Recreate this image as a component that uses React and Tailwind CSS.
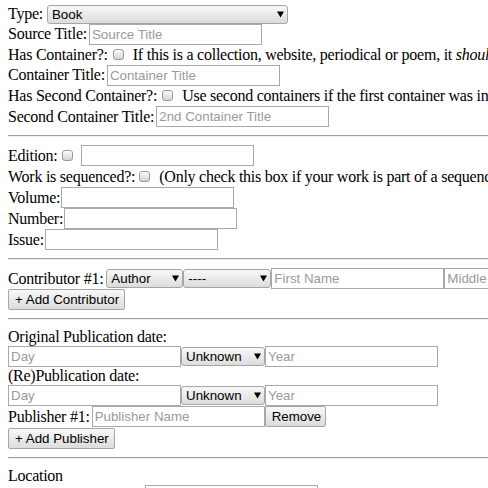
import React from 'react';

const sans = "font-['Liberation_Sans',Arial,sans-serif] text-[13.33px] tracking-normal";

function Field({ placeholder = '', w = 'w-[173px]' }) {
  return (
    <input
      type="text"
      placeholder={placeholder}
      className={`${w} h-[21px] shrink-0 border border-[#a9a9a9] bg-white px-[2px] text-black ${sans} placeholder:text-[#9a9a9a] outline-none`}
    />
  );
}

function Sel({ value, w }) {
  return (
    <span className={`relative inline-flex shrink-0 ${w} h-[19px]`}>
      <select
        defaultValue={value}
        className={`appearance-none w-full h-full rounded-[3px] border border-[#a6a6a6] bg-gradient-to-b from-[#f8f8f8] to-[#dcdcdc] pl-[4px] pr-[14px] text-black ${sans} leading-[17px] outline-none`}
      >
        <option>{value}</option>
      </select>
      <svg className="pointer-events-none absolute right-[4px] top-[6px]" width="7" height="7" viewBox="0 0 7 7">
        <path d="M0 0.5h7L3.5 6.5z" fill="#000" />
      </svg>
    </span>
  );
}

function Check({ ml = 'ml-[5px]', mr = 'mr-[9px]' }) {
  return (
    <input
      type="checkbox"
      className={`appearance-none w-[11px] h-[11px] shrink-0 rounded-[3px] border border-[#9a9a9a] bg-gradient-to-b from-[#fcfcfc] to-[#d4d4d4] ${ml} ${mr}`}
    />
  );
}

function Btn({ children, w }) {
  return (
    <button
      type="button"
      className={`${w} h-[21px] shrink-0 rounded-[2px] border border-[#a6a6a6] bg-gradient-to-b from-[#f8f8f8] to-[#dcdcdc] px-[6px] text-black ${sans} leading-[19px]`}
    >
      {children}
    </button>
  );
}

function Row({ h = 'h-[21px]', children }) {
  return <div className={`flex items-center ${h} whitespace-nowrap`}>{children}</div>;
}

function Rule() {
  return <div className="my-[8px] h-[2px] border-t border-[#9e9e9e] border-b border-b-[#eeeeee]" />;
}

export default function App() {
  return (
    <div className="w-[488px] h-[488px] overflow-hidden bg-white pl-[8px] pt-[4px] text-[16px] tracking-[-0.25px] text-black font-['Liberation_Serif','Times_New_Roman',serif]">
      <Row h="h-[20px]">
        <span className="mr-[4px]">Type:</span>
        <Sel value="Book" w="w-[241px]" />
      </Row>
      <Row h="h-[20px]">
        <span className="mr-[2px]">Source Title:</span>
        <Field placeholder="Source Title" />
      </Row>
      <Row>
        <span>Has Container?:</span>
        <Check />
        <span>
          If this is a collection, website, periodical or poem, it <i>should</i> be placed inside a container.
        </span>
      </Row>
      <Row h="h-[20px]">
        <span className="mr-[2px]">Container Title:</span>
        <Field placeholder="Container Title" />
      </Row>
      <Row>
        <span>Has Second Container?:</span>
        <Check />
        <span>Use second containers if the first container was inside another container.</span>
      </Row>
      <Row>
        <span className="mr-[2px]">Second Container Title:</span>
        <Field placeholder="2nd Container Title" />
      </Row>

      <Rule />

      <Row>
        <span>Edition:</span>
        <Check ml="ml-[4px]" mr="mr-[8px]" />
        <Field />
      </Row>
      <Row>
        <span>Work is sequenced?:</span>
        <Check ml="ml-[4px]" />
        <span>(Only check this box if your work is part of a sequence of volumes or issues)</span>
      </Row>
      <Row>
        <span className="mr-[1px]">Volume:</span>
        <Field />
      </Row>
      <Row>
        <span className="mr-[1px]">Number:</span>
        <Field />
      </Row>
      <Row>
        <span className="mr-[1px]">Issue:</span>
        <Field />
      </Row>

      <Rule />

      <Row>
        <span className="mr-[3px]">Contributor #1:</span>
        <Sel value="Author" w="w-[77px]" />
        <span className="w-[2px]" />
        <Sel value="----" w="w-[88px]" />
        <Field placeholder="First Name" />
        <Field placeholder="Middle Name" />
        <Field placeholder="Last Name" />
      </Row>
      <Row h="h-[21px]">
        <Btn w="w-[117px]">+ Add Contributor</Btn>
      </Row>

      <Rule />

      <Row h="h-[18px]">
        <span>Original Publication date:</span>
      </Row>
      <Row>
        <Field placeholder="Day" />
        <Sel value="Unknown" w="w-[84px]" />
        <Field placeholder="Year" />
      </Row>
      <Row h="h-[18px]">
        <span>(Re)Publication date:</span>
      </Row>
      <Row>
        <Field placeholder="Day" />
        <Sel value="Unknown" w="w-[84px]" />
        <Field placeholder="Year" />
      </Row>
      <Row>
        <span className="mr-[2px]">Publisher #1:</span>
        <Field placeholder="Publisher Name" />
        <Btn w="w-[61px]">Remove</Btn>
      </Row>
      <Row h="h-[22px]">
        <Btn w="w-[107px]">+ Add Publisher</Btn>
      </Row>

      <Rule />

      <Row h="h-[18px]">
        <span>Location</span>
      </Row>
      <Row>
        <Check />
        <span className="w-[112px]" />
        <Field />
      </Row>
    </div>
  );
}
